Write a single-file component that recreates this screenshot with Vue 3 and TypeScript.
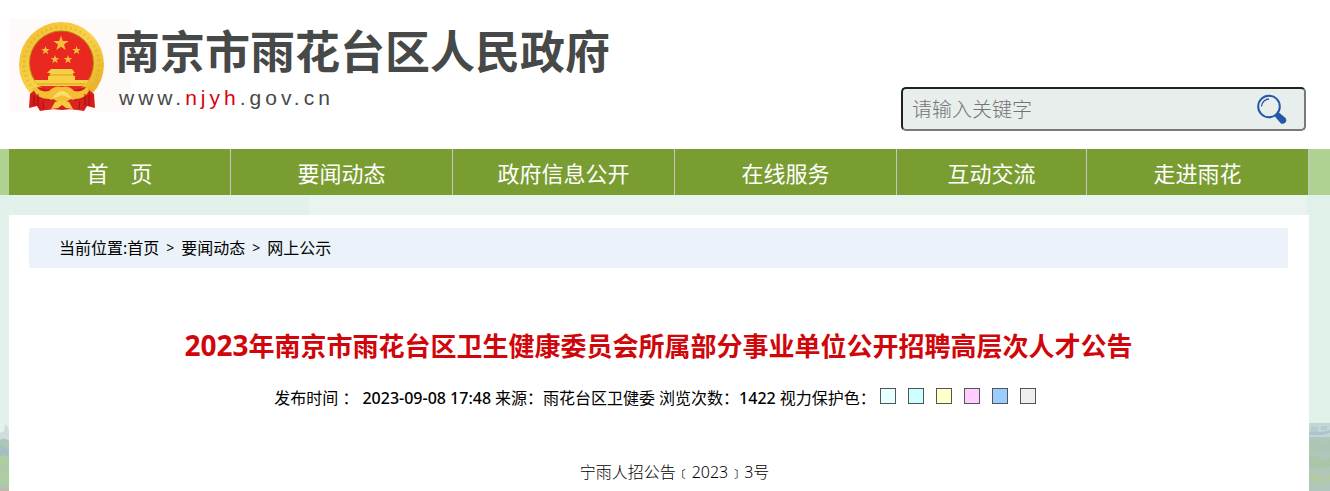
<script setup lang="ts">
import { ref } from 'vue'

interface NavItem {
  label: string
  narrow?: boolean
}

const navItems: NavItem[] = [
  { label: '首　页' },
  { label: '要闻动态' },
  { label: '政府信息公开' },
  { label: '在线服务' },
  { label: '互动交流', narrow: true },
  { label: '走进雨花' },
]

const swatches = [
  { name: '淡青', color: '#e6ffff' },
  { name: '青色', color: '#ccffff' },
  { name: '米黄', color: '#ffffcc' },
  { name: '粉色', color: '#ffccff' },
  { name: '蓝色', color: '#99ccff' },
  { name: '灰色', color: '#eeeeee' },
]

const stars = [
  { x: 52, y: 24.5, r: 8 },
  { x: 36.5, y: 31.5, r: 4.5 },
  { x: 67.5, y: 31.5, r: 4.5 },
  { x: 46, y: 40.5, r: 4.5 },
  { x: 59, y: 40.5, r: 4.5 },
]

function starPoints(x: number, y: number, r: number): string {
  return Array.from({ length: 10 }, (_, i) => {
    const radius = i % 2 ? r * 0.4 : r
    const angle = (i * Math.PI) / 5 - Math.PI / 2
    return `${(x + radius * Math.cos(angle)).toFixed(2)},${(y + radius * Math.sin(angle)).toFixed(2)}`
  }).join(' ')
}

const keyword = ref('')
const paper = ref('#ffffff')
</script>

<template>
  <div class="page">
    <header class="header">
      <a class="brand" href="#">
        <svg class="emblem" viewBox="0 0 122 93" aria-hidden="true">
          <defs>
            <linearGradient id="gold" x1="0" y1="0" x2="1" y2="1">
              <stop offset="0" stop-color="#f0bd2b" />
              <stop offset=".5" stop-color="#f8d44c" />
              <stop offset="1" stop-color="#e3a41b" />
            </linearGradient>
          </defs>
          <rect width="122" height="93" fill="#fffafa" />
          <circle cx="52.5" cy="45.5" r="42.5" fill="url(#gold)" />
          <circle cx="52.5" cy="45.5" r="37.5" fill="none" stroke="#dca324" stroke-width="3" stroke-dasharray="2 3" opacity=".4" />
          <circle cx="52.5" cy="44" r="32.500" fill="#b98216" />
          <circle cx="52.5" cy="44" r="31.500" fill="#e92820" />
          <polygon v-for="(s, i) in stars" :key="i" :points="starPoints(s.x, s.y, s.r)" fill="#f5bd3c" />
          <path d="M42 50h21l3 4h-2v3H41v-3h-3zM39 57h27v4h14l-4 6H29l-4-6h14z" fill="#f8cf43" />
          <path d="M28 65h48M40 56h25" stroke="#d99a27" stroke-width="1" />
          <path d="M21 75l-1 14 8-2 3 5 12-2 10 1 10-1 12 2 3-5 8 2-1-14-9-7-24 6-23-6z" fill="#d41c1a" />
          <path d="M27 67q4 7 13 5 6-6 13-4 7-2 12 4 9 2 13-5l2 5q-4 8-14 8l-13 5-13-5q-11 0-15-8z" fill="#f3bf35" />
          <path d="M43 80q5-8 10-8t10 8l-10-4z" fill="#fbe06a" />
          <path d="M30 80q9 4 14 0l9 5 9-5q5 4 14 0l-5 11-11-1-7-5-7 5-11 1z" fill="#d92520" />
          <path d="M42 90l4-7 7-2 7 2 4 7-7-1-4-3-4 3z" fill="#f7ca42" />
          <path d="M25 76v11m55-11v11M29 75v12m47-12v12M34 82l1 8m36-8l-1 8" fill="none" stroke="#a90d12" stroke-width="1" />
        </svg>
        <span class="brand-text">
          <span class="brand-name">南京市雨花台区人民政府</span>
          <span class="brand-url">www.<em>njyh</em>.gov.cn</span>
        </span>
      </a>
      <form class="search" role="search" @submit.prevent>
        <input v-model="keyword" type="text" aria-label="请输入关键字" placeholder="请输入关键字" />
        <button type="submit" aria-label="搜索">
          <svg viewBox="0 0 30 30" aria-hidden="true">
            <circle cx="12" cy="12.500" r="10.800" fill="none" stroke="#2457a6" stroke-width="2" />
            <path d="M4.500 12.500A8 8 0 0 1 12 5" fill="none" stroke="#2457a6" stroke-width="1.300" />
            <path d="M18.500 21l2.500-2.300 6.500 5.300q2 2 .3 4-2 1.800-4 .3l-4.800-5.600z" fill="#2457a6" stroke="#2457a6" stroke-width="1.500" />
          </svg>
        </button>
      </form>
    </header>

    <nav class="nav">
      <a v-for="item in navItems" :key="item.label" href="#" :class="{ narrow: item.narrow }">{{ item.label }}</a>
    </nav>

    <div class="backdrop">
      <svg class="scene" viewBox="0 0 21 68" preserveAspectRatio="none" aria-hidden="true">
        <rect width="21" height="68" fill="#b0c6ba" />
        <path d="M0 0h21v14H0z" fill="#c2d6d6" />
        <path d="M2 4h7v5H2zM12 3h6v4h-6z" fill="#b6cbcf" />
        <path d="M0 9h13l8-2v3l-8 2H0z" fill="#adc3cf" />
        <path d="M0 19q5-4 10 0t11-2v10q-8 4-21 0z" fill="#abc6b5" />
        <path d="M0 35q6-5 12 0t9-1v10q-12 4-21-1z" fill="#aac5a8" />
        <path d="M0 52q5-5 11 0t10-1v7q-11 3-21 0z" fill="#b4caa4" />
      </svg>
      <svg class="scene scene-left" viewBox="0 0 9 68" preserveAspectRatio="none" aria-hidden="true">
        <path d="M0 10l4-2 1-6h2l2 6v60H0z" fill="#cddedd" />
        <path d="M0 17q5-3 9 1v50H0z" fill="#abc7b8" />
        <path d="M0 24q4-2 9 4v7H0z" fill="#a3bfc2" />
        <path d="M0 33q5-3 9 3v8H0zM0 47q5-4 9 2v13H0z" fill="#afcba0" />
        <path d="M0 67l9-3v4H0z" fill="#c5b5a2" />
      </svg>
      <main class="paper" :style="{ backgroundColor: paper }">
        <div class="crumbs">
          <span>当前位置:</span><a href="#">首页</a><i>&gt;</i><a href="#">要闻动态</a><i>&gt;</i><a href="#">网上公示</a>
        </div>
        <h1><span>2023</span>年南京市雨花台区卫生健康委员会所属部分事业单位公开招聘高层次人才公告</h1>
        <div class="meta">
          <span>发布时间 ：</span>
          <time>2023-09-08 17:48</time>
          <span>来源：雨花台区卫健委</span>
          <span>浏览次数：<strong>1422</strong></span>
          <span>视力保护色：</span>
          <div class="swatches">
            <button
              v-for="s in swatches"
              :key="s.name"
              type="button"
              :aria-label="s.name"
              :style="{ backgroundColor: s.color }"
              @click="paper = s.color"
            ></button>
          </div>
        </div>
        <p class="doc-no">宁雨人招公告﹝2023﹞3号</p>
      </main>
    </div>
  </div>
</template>

<style>
body {
  margin: 0;
  background: #fff;
}
</style>

<style scoped>
.page {
  display: flex;
  flex-direction: column;
  min-height: 100vh;
  font-family: "Noto Sans", "Noto Sans CJK SC", sans-serif;
  font-size: 16px;
  color: #000;
}

a {
  color: inherit;
  text-decoration: none;
}

.header {
  display: flex;
  justify-content: space-between;
  align-items: flex-start;
  box-sizing: border-box;
  height: 149px;
  padding: 19px 24px 0 9px;
}

.brand {
  display: flex;
}

.emblem {
  width: 122px;
  height: 93px;
}

.brand-text {
  display: flex;
  flex-direction: column;
  margin-left: -16px;
  color: #474948;
}

.brand-name {
  font: bold 45px/62px "Noto Sans CJK SC", sans-serif;
  white-space: nowrap;
}

.brand-url {
  padding-left: 4px;
  font: 21px/34px "Liberation Sans", Arial, sans-serif;
  letter-spacing: 4px;
}

.brand-url em {
  font-style: normal;
  color: #d7000f;
}

.search {
  display: flex;
  align-items: center;
  box-sizing: border-box;
  width: 405px;
  height: 44px;
  margin-top: 68px;
  padding: 0 17px 0 9px;
  border: 2px solid;
  border-color: #1f2123 #75797a #75797a #1f2123;
  border-radius: 5px;
  background: #e8eeec;
}

.search input {
  flex: 1;
  min-width: 0;
  padding: 0;
  border: 0;
  outline: 0;
  background: none;
  font: 300 20px/30px "Noto Sans CJK SC", sans-serif;
}

.search input::placeholder {
  color: #757575;
}

.search button {
  width: 30px;
  height: 30px;
  padding: 0;
  border: 0;
  background: none;
  cursor: pointer;
}

.search svg {
  display: block;
}

.nav {
  display: flex;
  padding: 0 21px 0 9px;
  background: #afd191;
}

.nav a {
  flex: 222 1 0;
  box-sizing: border-box;
  border-right: 1px solid #c5c5c5;
  background: #7a9d31;
  color: #fff;
  font: 22px/46px "Noto Sans CJK SC", sans-serif;
  text-align: center;
  white-space: nowrap;
}

.nav .narrow {
  flex-grow: 190;
}

.backdrop {
  position: relative;
  display: flex;
  flex: 1;
  padding: 20px 21px 0 9px;
  background: linear-gradient(90deg, #e2f1ea 309px, #eaf4ee 309px, #eaf4ee calc(100% - 23px), #dff1e8 calc(100% - 23px));
}

.scene {
  position: absolute;
  right: 0;
  bottom: 0;
  width: 21px;
  height: 68px;
}

.scene-left {
  right: auto;
  left: 0;
  width: 9px;
}

.paper {
  flex: 1;
  min-width: 0;
  padding: 13px 21px 0 20px;
}

.crumbs {
  display: flex;
  padding-left: 30px;
  background: #ebf2fa;
  line-height: 40px;
}

.crumbs i {
  width: 22px;
  font-style: normal;
  font-size: 14px;
  text-align: center;
}

h1 {
  margin: 57px 0 0;
  color: #d0060a;
  font-size: 26px;
  line-height: 40px;
  text-align: center;
}

h1 span {
  font-size: 28px;
}

.meta {
  display: flex;
  justify-content: center;
  gap: 4px;
  margin-top: 19px;
  padding-right: 7px;
  line-height: 26px;
}

.meta time,
.meta strong {
  font-weight: 500;
}

.swatches {
  display: flex;
  gap: 12px;
  padding-top: 3px;
}

.swatches button {
  width: 16px;
  height: 16px;
  padding: 0;
  border: 1px solid #555;
  cursor: pointer;
}

.doc-no {
  margin: 48px 0 0;
  padding-left: 32px;
  font-weight: 300;
  line-height: 26px;
  text-align: center;
}
</style>
